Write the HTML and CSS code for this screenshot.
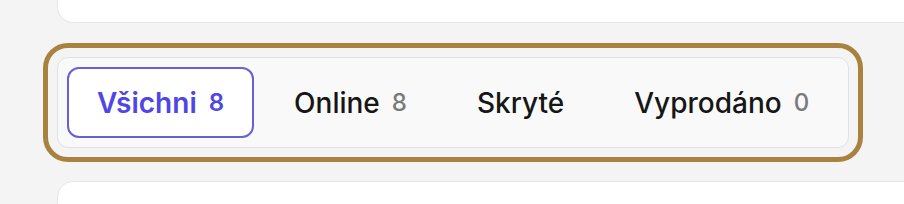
FILE: index.html
```html
<!DOCTYPE html>
<html lang="cs">

<head>
    <meta charset="UTF-8">
    <meta name="viewport" content="width=device-width, initial-scale=1.0">
    <title>Produkty</title>
    <link rel="stylesheet" href="styles.css">
</head>

<body>
    <div class="card card-top"></div>

    <div class="tabs" role="tablist">
        <button class="tab active" role="tab">Všichni <span class="count">8</span></button>
        <button class="tab" role="tab">Online <span class="count">8</span></button>
        <button class="tab" role="tab">Skryté</button>
        <button class="tab" role="tab">Vyprodáno <span class="count">0</span></button>
    </div>

    <div class="card card-bottom"></div>
</body>

</html>
```

FILE: styles.css
```css
body, html {
    margin: 0;
    padding: 0;
    font-family: Inter, "Noto Sans", sans-serif;
    background-color: #f4f4f4;
    height: 100%;
    overflow: hidden;
}

body {
    padding-left: 57px;
}

.card {
    background-color: #ffffff;
    border: 1px solid #e6e6e6;
    margin-right: -40px;
}

.card-top {
    height: 22px;
    border-top: none;
    border-radius: 0 0 16px 16px;
}

.card-bottom {
    height: 60px;
    margin-top: 33px;
    border-radius: 16px 16px 0 0;
}

/* Tab list with focus ring */
.tabs {
    display: flex;
    gap: 10px;
    width: max-content;
    margin-top: 34px;
    padding: 9px;
    background-color: #f9f9f9;
    border: 1px solid #e2e2e2;
    border-radius: 11px;
    outline: 5px solid #a8823e;
    outline-offset: 9px;
}

.tab {
    display: flex;
    align-items: center;
    gap: 12px;
    height: 71px;
    box-sizing: border-box;
    padding: 0 28px;
    background: none;
    border: 2px solid transparent;
    border-radius: 12px;
    font-family: inherit;
    font-size: 28px;
    font-weight: 500;
    color: #161616;
    cursor: pointer;
}

.tab.active {
    background-color: #ffffff;
    border-color: #6660db;
    color: #4f46e5;
    font-weight: 600;
}

.count {
    font-size: 24px;
    font-weight: 500;
    color: #7a7a7a;
}

.tab.active .count {
    color: #4f46e5;
    font-weight: 600;
}
```
